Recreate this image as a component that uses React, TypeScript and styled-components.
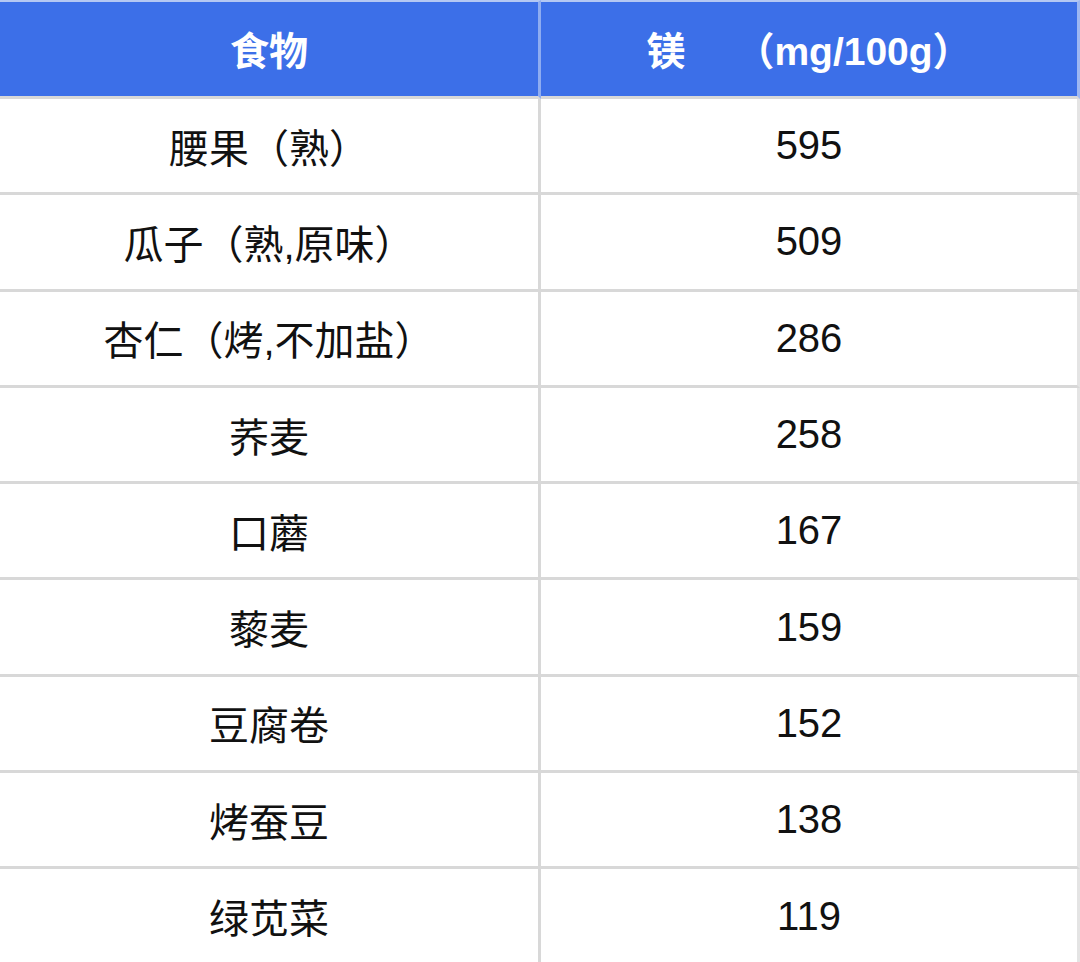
import { Fragment } from "react";
import styled, { createGlobalStyle } from "styled-components";

const rows: [string, string][] = [
  ["腰果（熟）", "595"],
  ["瓜子（熟,原味）", "509"],
  ["杏仁（烤,不加盐）", "286"],
  ["荞麦", "258"],
  ["口蘑", "167"],
  ["藜麦", "159"],
  ["豆腐卷", "152"],
  ["烤蚕豆", "138"],
  ["绿苋菜", "119"],
];

const GlobalStyle = createGlobalStyle`
  html, body {
    margin: 0;
    padding: 0;
    background: #ffffff;
  }
  body {
    font-family: "Liberation Sans", "Noto Sans CJK SC", sans-serif;
    overflow: hidden;
  }
`;

const Table = styled.div`
  width: 1080px;
  height: 962px;
  overflow: hidden;
  display: grid;
  grid-template-columns: 541px 539px;
  grid-auto-rows: min-content;
  background: #ffffff;
`;

const HeadCell = styled.div<{ $last?: boolean }>`
  box-sizing: border-box;
  height: 99px;
  display: flex;
  align-items: center;
  justify-content: center;
  padding-bottom: 3px;
  background: #3c6fe8;
  color: #ffffff;
  font-size: 39px;
  font-weight: 700;
  border-top: 2px solid #b4c8f3;
  border-bottom: 3px solid #d8d8d8;
  border-right: 3px solid ${(p) => (p.$last ? "#9db7f2" : "#8eacf1")};
  white-space: pre;
`;

const Gap = styled.span`
  display: inline-block;
  width: 50px;
`;

const Cell = styled.div<{ $last?: boolean }>`
  box-sizing: border-box;
  height: 96.3px;
  display: flex;
  align-items: center;
  justify-content: center;
  color: #111111;
  font-size: 40px;
  font-weight: 400;
  border-bottom: 3px solid #d8d8d8;
  border-right: 3px solid ${(p) => (p.$last ? "#e4e4e4" : "#d8d8d8")};
  white-space: nowrap;
`;

export default function App() {
  return (
    <>
      <GlobalStyle />
      <Table>
        <HeadCell>食物</HeadCell>
        <HeadCell $last>
          镁<Gap />（mg/100g）
        </HeadCell>
        {rows.map(([food, value]) => (
          <Fragment key={food}>
            <Cell>{food}</Cell>
            <Cell $last>{value}</Cell>
          </Fragment>
        ))}
      </Table>
    </>
  );
}
